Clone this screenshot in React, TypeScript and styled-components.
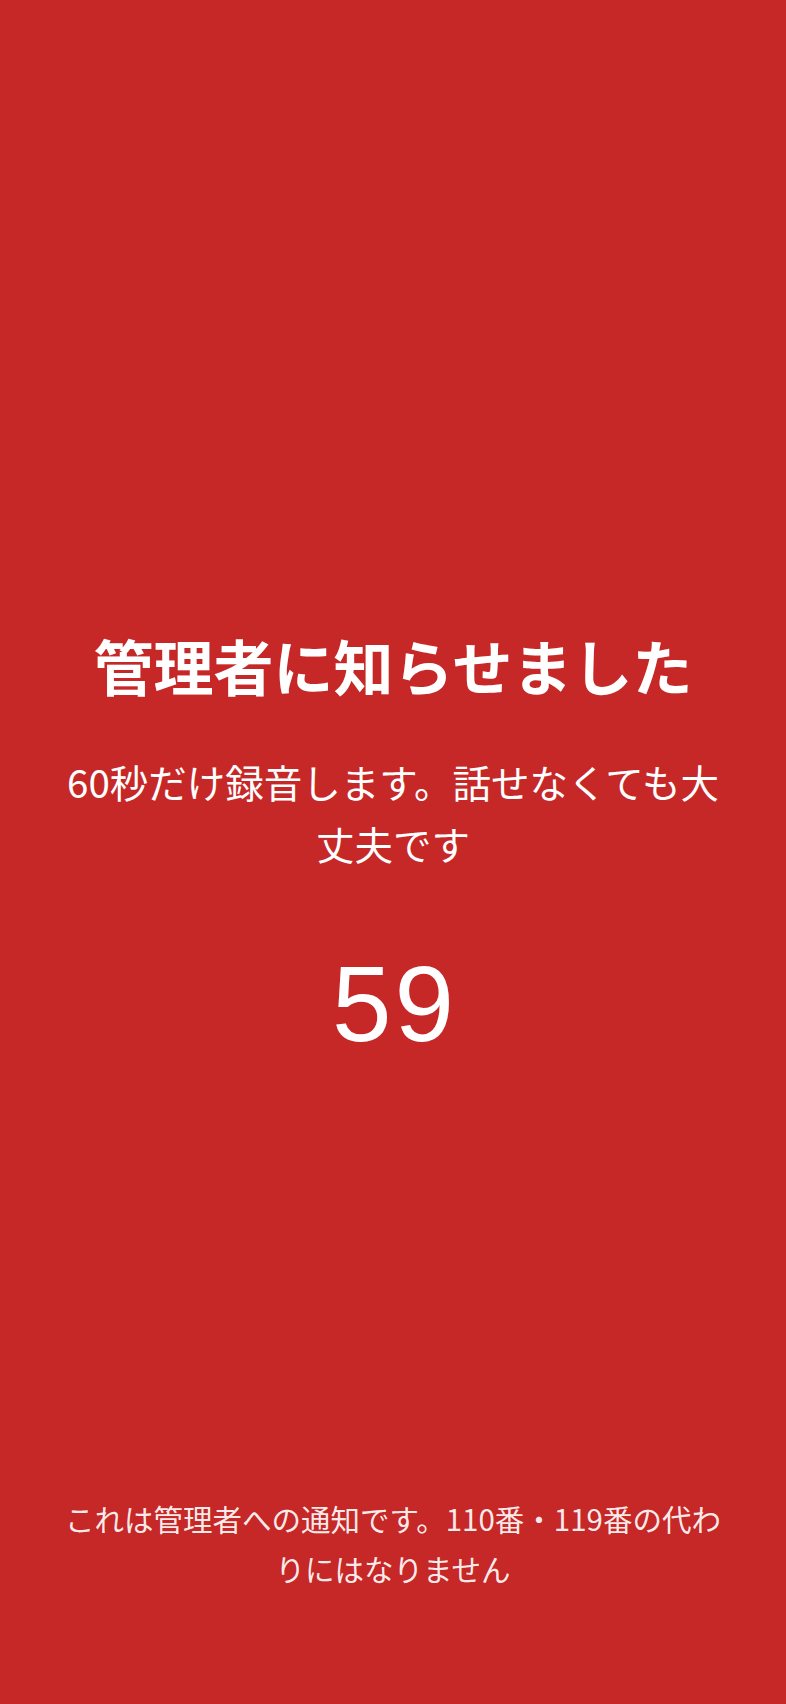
import { createGlobalStyle, styled } from "styled-components";

const GlobalStyle = createGlobalStyle`
  html, body {
    margin: 0;
    padding: 0;
    background: #c62828;
  }
  body {
    font-family: "Noto Sans CJK JP", "Noto Sans", sans-serif;
    -webkit-font-smoothing: antialiased;
  }
`;

const Screen = styled.div`
  min-height: 100vh;
  box-sizing: border-box;
  display: grid;
  grid-template-rows: 1fr auto 1fr;
  background: #c62828;
  color: #ffffff;
  padding: 0 60px 111px;
  text-align: center;
`;

const Content = styled.main`
  grid-row: 2;
  display: flex;
  flex-direction: column;
  align-items: center;
  padding-top: 96px;
`;

const Title = styled.h1`
  margin: 0;
  font-size: 60px;
  line-height: 78px;
  font-weight: 700;
`;

const Message = styled.p`
  margin: 46px 0 0;
  font-size: 38.5px;
  line-height: 62px;
  font-weight: 400;
`;

const Countdown = styled.div`
  margin-top: 70px;
  font-family: "Liberation Sans", Arial, sans-serif;
  font-size: 107px;
  line-height: 120px;
  font-weight: 400;
  letter-spacing: 3px;
  text-indent: 3px;
`;

const Footer = styled.footer`
  grid-row: 3;
  align-self: end;
  font-size: 29.5px;
  line-height: 50px;
  color: rgba(255, 255, 255, 0.92);
`;

const App = () => {
  const seconds = 59;
  return (
    <>
      <GlobalStyle />
      <Screen>
        <Content>
          <Title>管理者に知らせました</Title>
          <Message>60秒だけ録音します。話せなくても大丈夫です</Message>
          <Countdown>{seconds}</Countdown>
        </Content>
        <Footer>これは管理者への通知です。110番・119番の代わりにはなりません</Footer>
      </Screen>
    </>
  );
};

export default App;
